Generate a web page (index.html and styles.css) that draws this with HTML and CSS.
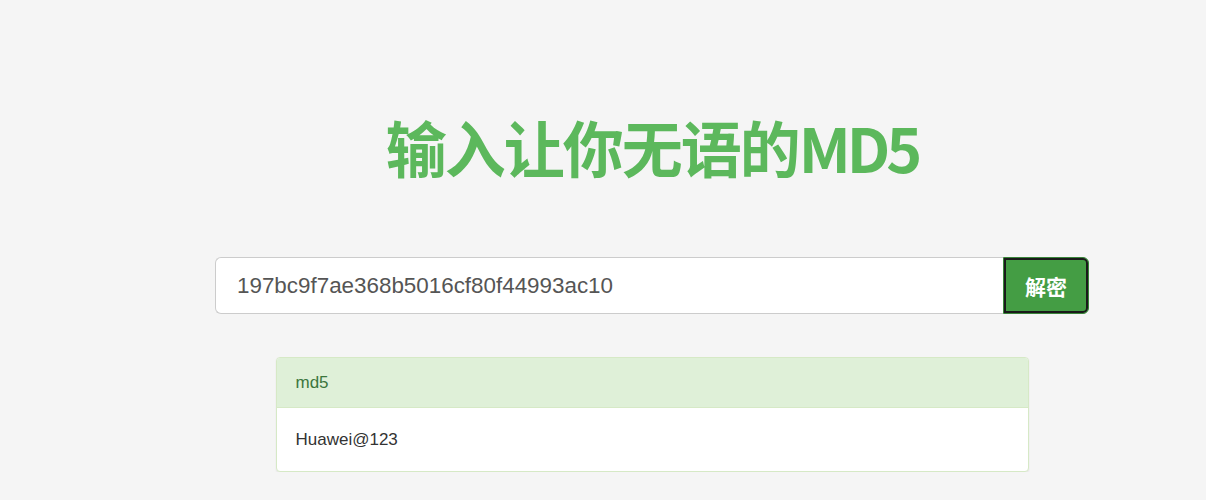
FILE: index.html
```html
<!DOCTYPE html>
<html lang="zh-CN">
<head>
<meta charset="utf-8">
<title>MD5</title>
<link rel="stylesheet" href="styles.css">
</head>
<body>
<div class="page">
  <h1 class="title">输入让你无语的<span class="title-latin">MD5</span></h1>
  <div class="search">
    <input class="search-input" type="text" value="197bc9f7ae368b5016cf80f44993ac10">
    <button class="search-btn" type="button">解密</button>
  </div>
  <div class="panel">
    <div class="panel-heading">md5</div>
    <div class="panel-body">Huawei@123</div>
  </div>
</div>
</body>
</html>
```

FILE: styles.css
```css
html, body {
  margin: 0;
  padding: 0;
  background: #f5f5f5;
}
body {
  font-family: "Liberation Sans", Arial, "Noto Sans CJK SC", sans-serif;
  color: #333;
}
.page {
  width: 1108px;
  margin-left: 98px;
  display: flex;
  flex-direction: column;
  align-items: center;
  padding-top: 114px;
}
.title {
  margin: 0;
  font-family: "Noto Sans CJK SC", sans-serif;
  font-weight: 700;
  font-size: 61px;
  line-height: 66px;
  color: #5cb85c;
  letter-spacing: -2px;
}
.title-latin {
  letter-spacing: -4px;
}
.search {
  margin-top: 77px;
  width: 874px;
  display: flex;
  height: 57px;
}
.search-input {
  flex: 1;
  box-sizing: border-box;
  height: 57px;
  margin: 0;
  border: 1px solid #ccc;
  border-right: 0;
  border-radius: 6px 0 0 6px;
  background: #fff;
  padding: 0 21px;
  font-family: "Liberation Sans", Arial, sans-serif;
  font-size: 22.4px;
  color: #555;
  outline: none;
}
.search-btn {
  width: 86px;
  height: 57px;
  box-sizing: border-box;
  margin: 0;
  border: 1px solid #398439;
  border-radius: 0 6px 6px 0;
  background: #449d44;
  box-shadow: inset 0 0 0 2px #1a1a1a;
  color: #fff;
  font-family: "Noto Sans CJK SC", sans-serif;
  font-weight: 700;
  font-size: 21px;
  padding: 0;
  cursor: pointer;
}
.panel {
  margin-top: 43px;
  width: 753px;
  box-sizing: border-box;
  background: #fff;
  border: 1px solid #d6e9c6;
  border-radius: 4px;
  box-shadow: 0 1px 2px rgba(0,0,0,.07);
  overflow: hidden;
}
.panel-heading {
  background: #dff0d8;
  color: #3c763d;
  padding: 15px 19px;
  font-size: 17px;
  line-height: 19px;
  border-bottom: 1px solid #d6e9c6;
}
.panel-body {
  padding: 20px 19px;
  font-size: 17px;
  line-height: 23px;
  color: #333;
}
```
